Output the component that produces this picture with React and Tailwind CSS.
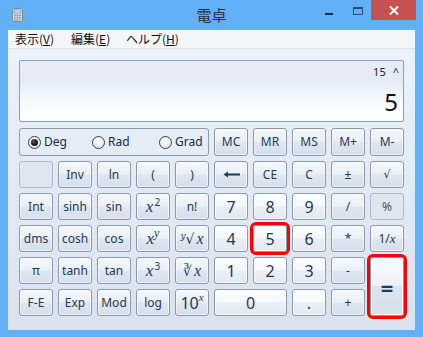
import React from "react";

const FN =
  "border-[#8c99ab] bg-[linear-gradient(to_bottom,#f5f8fc_0%,#ebf0f6_46%,#dee6ef_54%,#d7e0ea_100%)] text-[#1e395b] shadow-[inset_0_0_0_1px_rgba(255,255,255,0.55)]";
const NUM =
  "border-[#8c99ab] bg-[linear-gradient(to_bottom,#fdfeff_0%,#f4f7fb_46%,#eaeff6_54%,#e3e9f1_100%)] text-[#1e395b] shadow-[inset_0_0_0_1px_rgba(255,255,255,0.7)]";
const DIS = "border-[#aeb9c8] bg-[#dfe6ef] text-[#44597a]";
const EQ =
  "border-[#8c99ab] bg-[linear-gradient(to_bottom,#f8fafd_0%,#eef2f8_48%,#dce4ee_50%,#d8e0ea_100%)] text-[#1e395b] shadow-[inset_0_0_0_1px_rgba(255,255,255,0.7)]";
const RED = "outline-[3px] outline-solid outline-[#ff0000]";

function Btn({ children, kind = "fn", className = "" }) {
  const k = kind === "num" ? NUM : kind === "dis" ? DIS : kind === "eq" ? EQ : FN;
  const size = kind === "num" ? "text-[16px]" : "text-[12px]";
  return (
    <div
      className={`flex items-center justify-center rounded-[3px] border leading-none select-none ${size} ${k} ${className}`}
    >
      {children}
    </div>
  );
}

const X = ({ s = "text-[17px]" }) => (
  <span className={`font-['Liberation_Serif',serif] italic ${s}`}>x</span>
);

function Radio({ label, checked, w }) {
  return (
    <div className={`flex items-center gap-[3px] ${w}`}>
      <div className="flex h-[13px] w-[13px] items-center justify-center rounded-full border border-[#3d3d3d] bg-[radial-gradient(circle_at_40%_35%,#ffffff_0%,#e6e9ee_70%,#c9ced6_100%)]">
        {checked && <div className="h-[7px] w-[7px] rounded-full bg-[radial-gradient(circle_at_40%_35%,#555_0%,#111_70%)]" />}
      </div>
      <span className="text-[12px] text-[#1c2a3f]">{label}</span>
    </div>
  );
}

function CalcIcon() {
  return (
    <svg width="11" height="14" viewBox="0 0 11 14">
      <rect x="0.5" y="0.5" width="10" height="13" rx="1" fill="#d3dbe4" stroke="#7e8b9a" />
      <rect x="2" y="2" width="7" height="3" fill="#b9def4" stroke="#6d8aa6" strokeWidth="0.6" />
      {[0, 1, 2].map((r) =>
        [0, 1, 2].map((c) => (
          <rect
            key={`${r}-${c}`}
            x={2 + c * 2.5}
            y={6.5 + r * 2.3}
            width="1.7"
            height="1.5"
            fill={r === 2 && c === 2 ? "#f0a040" : "#8a96a6"}
          />
        ))
      )}
    </svg>
  );
}

export default function App() {
  return (
    <div className="flex h-[337px] w-[423px] flex-col bg-[#62b1f7] font-['Noto_Sans','Noto_Sans_CJK_JP',sans-serif]">
      {/* title bar */}
      <div className="grid h-[30px] grid-cols-[1fr_auto_1fr]">
        <div className="pl-[12px] pt-[8px]">
          <CalcIcon />
        </div>
        <div className="pt-[5px] text-[15px] leading-[20px] text-[#2b2f36] font-['Noto_Sans_CJK_JP',sans-serif]">
          電卓
        </div>
        <div className="flex items-start justify-end pr-[7px]">
          <div className="h-[20px] w-[26px] pl-[6px] pt-[13px]">
            <div className="h-[2px] w-[8px] bg-[#1f2a38]" />
          </div>
          <div className="h-[20px] w-[26px] pl-[8px] pt-[7px]">
            <div className="h-[8px] w-[10px] border border-t-2 border-[#2e4a73]" />
          </div>
          <div className="flex h-[20px] w-[45px] items-center justify-center bg-[#c75050]">
            <svg width="10" height="9" viewBox="0 0 10 9">
              <path d="M1 0.5 L9 8.5 M9 0.5 L1 8.5" stroke="#ffffff" strokeWidth="2" />
            </svg>
          </div>
        </div>
      </div>

      {/* client */}
      <div className="mx-[8px] mb-[7px] flex flex-1 flex-col bg-[linear-gradient(to_bottom,#edf3fb_0%,#e4ecf6_40%,#d9e3ef_100%)]">
        {/* menu */}
        <div className="flex h-[19px] items-center border-b border-[#dfe4ea] bg-[#f4f5f7] pl-[7px] text-[12px] text-[#111] font-['Noto_Sans_CJK_JP',sans-serif]">
          <span className="w-[56px]">
            表示(<span className="underline">V</span>)
          </span>
          <span className="w-[55px]">
            編集(<span className="underline">E</span>)
          </span>
          <span>
            ヘルプ(<span className="underline">H</span>)
          </span>
        </div>

        <div className="px-[11px] pt-[11px]">
          {/* display */}
          <div className="flex h-[62px] flex-col justify-between rounded-[2px] border border-[#8f9db0] bg-[linear-gradient(to_bottom,#e8eef8_0%,#e3ebf7_30%,#f7f9fd_65%,#ffffff_100%)] pb-[7px] pr-[4px] pt-[4px]">
            <div className="flex justify-end gap-[7px] text-[11px] leading-[14px] text-[#222]">
              <span>15</span>
              <span>^</span>
            </div>
            <div className="pr-[1px] text-right text-[24px] leading-[24px] text-[#111]">5</div>
          </div>

          {/* keys */}
          <div className="mt-[6px] grid grid-cols-[repeat(10,34px)] grid-rows-[28px_repeat(5,27px)] gap-x-[5px] gap-y-[5px]">
            <div className="col-span-5 flex items-center rounded-[3px] border border-[#8e9aab] pl-[8px]">
              <Radio label="Deg" checked w="w-[64px]" />
              <Radio label="Rad" w="w-[67px]" />
              <Radio label="Grad" w="" />
            </div>
            <Btn>MC</Btn>
            <Btn>MR</Btn>
            <Btn>MS</Btn>
            <Btn>M+</Btn>
            <Btn>M-</Btn>

            <Btn kind="dis"></Btn>
            <Btn>Inv</Btn>
            <Btn>ln</Btn>
            <Btn>(</Btn>
            <Btn>)</Btn>
            <Btn>
              <svg width="17" height="7" viewBox="0 0 17 7">
                <path d="M0.5 3.5 L5 0.5 L5 6.5 Z" fill="#1e395b" />
                <rect x="4" y="2.5" width="13" height="2" fill="#1e395b" />
              </svg>
            </Btn>
            <Btn>CE</Btn>
            <Btn>C</Btn>
            <Btn>±</Btn>
            <Btn>
              <span className="font-['DejaVu_Sans',sans-serif] text-[11px]">√</span>
            </Btn>

            <Btn>Int</Btn>
            <Btn>sinh</Btn>
            <Btn>sin</Btn>
            <Btn>
              <X />
              <sup className="ml-[1px] text-[10px]">2</sup>
            </Btn>
            <Btn>n!</Btn>
            <Btn kind="num">7</Btn>
            <Btn kind="num">8</Btn>
            <Btn kind="num">9</Btn>
            <Btn>/</Btn>
            <Btn kind="dis">%</Btn>

            <Btn>dms</Btn>
            <Btn>cosh</Btn>
            <Btn>cos</Btn>
            <Btn>
              <X />
              <sup className="font-['Liberation_Serif',serif] text-[12px] italic">y</sup>
            </Btn>
            <Btn>
              <span className="font-['DejaVu_Serif',serif] text-[14px]">
                <sup className="text-[9px] italic">y</sup>√
              </span>
              <span className="ml-[2px]">
                <X s="text-[16px]" />
              </span>
            </Btn>
            <Btn kind="num">4</Btn>
            <Btn kind="num" className={RED}>
              5
            </Btn>
            <Btn kind="num">6</Btn>
            <Btn>*</Btn>
            <Btn>
              <span>1/</span>
              <X s="text-[13px]" />
            </Btn>

            <Btn>π</Btn>
            <Btn>tanh</Btn>
            <Btn>tan</Btn>
            <Btn>
              <X />
              <sup className="ml-[1px] text-[10px]">3</sup>
            </Btn>
            <Btn>
              <span className="font-['DejaVu_Serif',serif] text-[14px]">∛</span>
              <span className="ml-[2px]">
                <X s="text-[16px]" />
              </span>
            </Btn>
            <Btn kind="num">1</Btn>
            <Btn kind="num">2</Btn>
            <Btn kind="num">3</Btn>
            <Btn>-</Btn>
            <Btn kind="eq" className={`row-span-2 ${RED}`}>
              <span className="text-[22px] font-bold leading-none">=</span>
            </Btn>

            <Btn>F-E</Btn>
            <Btn>Exp</Btn>
            <Btn>Mod</Btn>
            <Btn>log</Btn>
            <Btn>
              <span className="text-[16px]">10</span>
              <sup className="font-['Liberation_Serif',serif] text-[11px] italic">x</sup>
            </Btn>
            <Btn kind="num" className="col-span-2">
              0
            </Btn>
            <Btn kind="num">.</Btn>
            <Btn>+</Btn>
          </div>
        </div>
      </div>
    </div>
  );
}
